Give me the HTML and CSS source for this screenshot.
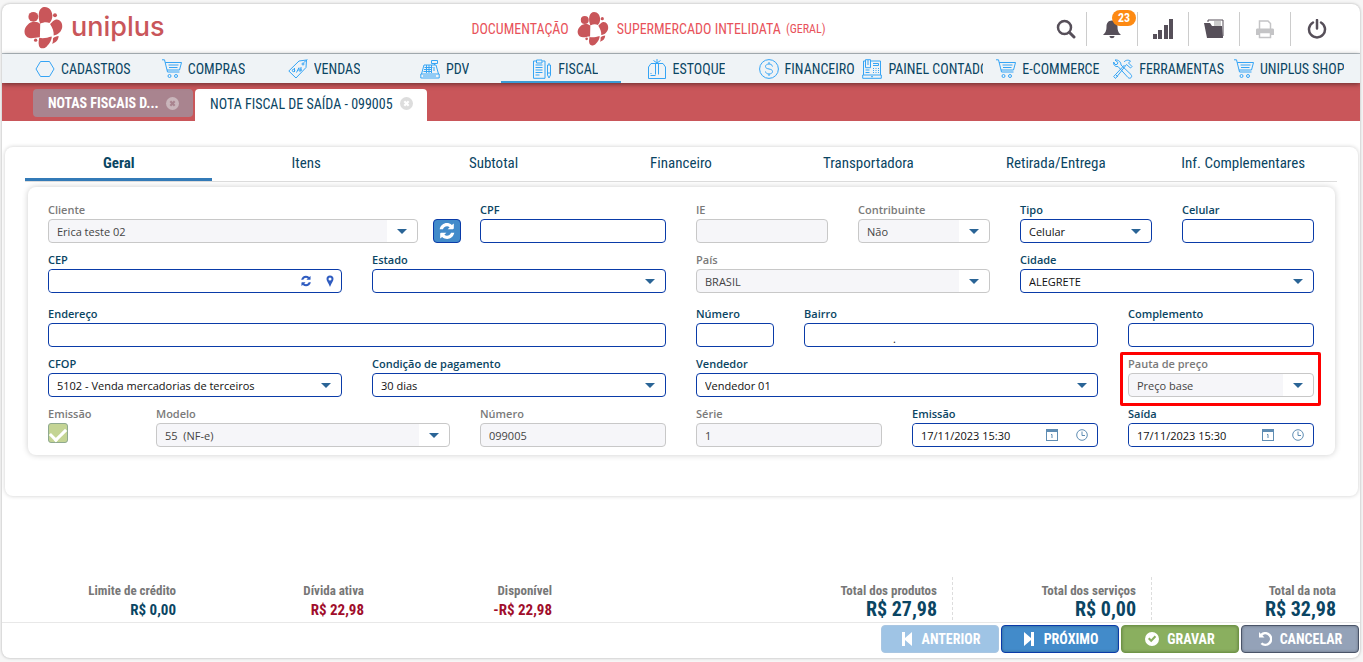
FILE: index.html
```html
<!DOCTYPE html>
<html lang="pt-BR">
<head>
    <meta charset="UTF-8">
    <meta name="viewport" content="width=device-width, initial-scale=1.0">
    <title>Uniplus - Nota Fiscal de Saída</title>
    <link rel="stylesheet" href="styles.css">
</head>
<body>
    <!-- Ícones -->
    <svg class="sprite" aria-hidden="true">
        <symbol id="i-mark" viewBox="0 0 116 128">
            <path d="M62 0C76 0 84 12 85 26C85 36 82 43 76 49C68 45 58 46 48 51C44 40 42 30 44 18C46 6 54 0 62 0Z"/>
            <circle cx="27" cy="30" r="15"/>
            <path d="M24 46C34 44 42 46 48 52L47 92C36 91 20 99 9 92C-3 85 -2 66 7 57C12 52 16 47 24 46Z"/>
            <path d="M96 38C108 36 117 48 115 62C113 74 104 85 89 87C90 76 86 64 78 52C84 46 89 40 96 38Z"/>
            <circle cx="93" cy="25" r="6"/>
            <path d="M45 94C58 98 70 93 83 90C84 100 76 112 68 120C60 128 46 128 44 117C42 108 44 102 45 94Z"/>
            <path d="M87 95C92 90 98 89 104 88C104 99 97 108 84 112C88 106 86 100 87 95Z"/>
            <circle cx="34" cy="101" r="5"/>
        </symbol>
        <symbol id="i-hex" viewBox="0 0 20 20"><path d="M5.500 2.500h9L19 10l-4.500 7.500h-9L1 10z"/></symbol>
        <symbol id="i-cart" viewBox="0 0 20 20"><path d="M0 .8h2.500L5.500 13h12M3.200 3.500H19.500L17.500 11H5M6.500 6h10M7 8.500h8.500"/><circle cx="7.500" cy="17" r="1.500"/><circle cx="14" cy="17" r="1.500"/></symbol>
        <symbol id="i-tag" viewBox="0 0 20 20"><path d="M.8 12L11 2l7.500-1L18 8.500 8 19zM19.500.3l-4 3.500M6.500 9v4M13 8v4M11 8.500l-2.500 5"/><circle cx="15" cy="5" r="1"/><circle cx="5.500" cy="11.500" r="1.200"/><circle cx="12" cy="11" r="1.200"/></symbol>
        <symbol id="i-pdv" viewBox="0 0 20 20"><path d="M.8 15h18.400v4H.8zM1.500 15L4 6h12l2.500 9M11.500 1.500h6v3h-6zM14.500 4.500V6M4.500 8.500h8M4 10.500h8M3.500 12.500h8M6.500 6v8M9 6v8M11.500 6v8M14 8v4M3 17h13"/></symbol>
        <symbol id="i-fiscal" viewBox="0 0 20 20"><path d="M4 2H1.500v17.300h11.500V2H10.500M4.500 1h5.500v3H4.500zM3.500 6h7M3.500 8.500h7M3.500 11h7M3.500 13.500h7M3.500 16h4M15.500 6h3v10L17 19l-1.500-3zM17 4v2M15.500 14h3"/></symbol>
        <symbol id="i-box" viewBox="0 0 20 20"><path d="M1.500 8L4 4.500h12L18.500 8v11.500h-17zM8.500 4.500v11M11.500 4.500v11M10 4.500V0M6.500 1.500L10 4l3.500-2.500M3.500 16.500h5M3.500 14.500h1"/></symbol>
        <symbol id="i-money" viewBox="0 0 20 20"><circle cx="10" cy="10" r="9.400"/><path d="M13.500 7.500C13 5.500 11.500 5 10 5 8 5 6.500 6 6.500 7.500c0 3.500 7 1.500 7 5C13.500 14 12 15 10 15s-3.300-1-3.500-2.500M10 3v2M10 15v2"/></symbol>
        <symbol id="i-painel" viewBox="0 0 20 20"><path d="M1.500 16V2h2M9 2h9.500v14M.7 16h18.600v3.300H.7zM3.500.7h5v8h-5zM6 1v5M11 4.500h5.500v2H11M3.500 11h4M3.500 13.500h4M11 9.500h1M13.500 9.500h1M16 9.500h1M11 11.500h1M13.500 11.500h1M16 11.500h1M11 13.500h1M13.500 13.500h1M16 13.500h1M9 17.700h2"/></symbol>
        <symbol id="i-tools" viewBox="0 0 20 20"><path d="M2 1l3 2.500-1 2L2 5.500.7 3C0 5.500 2 8 5 7.500l10 11c2 2 5-.5 3-3L8 6C8 3 5.500.5 2 1zM11 3c2-2.500 5-2 6.500-1L15.500 4l3.500 3.500-1.500 1.500-4-3.500L2.500 19.500.7 17.500 11.500 6M3 16l2 2"/></symbol>
        <symbol id="i-sync" viewBox="0 0 512 512"><path d="M450 40v140c0 14-10 24-24 24H274l58-58c-68-54-158-26-192 58H48C82 40 262-30 394 84zM62 472V332c0-14 10-24 24-24h152l-58 58c68 54 158 26 192-58h92c-34 164-214 234-346 120z"/></symbol>
    </svg>

    <div class="app">
        <header class="topbar">
            <a class="logo" href="#">
                <svg class="mark"><use href="#i-mark"/></svg>
                <span>uniplus</span>
            </a>
            <div class="company">
                <span>DOCUMENTAÇÃO</span>
                <svg class="mark-small"><use href="#i-mark"/></svg>
                <span>SUPERMERCADO INTELIDATA</span>
                <small>(GERAL)</small>
            </div>
            <div class="actions">
                <button type="button" aria-label="Pesquisar"><svg viewBox="0 0 20 20"><circle cx="8.500" cy="8.500" r="6.500" fill="none" stroke="currentColor" stroke-width="2.500"/><path d="M13.500 13.500l4.500 4.500" stroke="currentColor" stroke-width="3" stroke-linecap="round"/></svg></button>
                <button type="button" aria-label="Notificações"><svg viewBox="0 0 20 20"><path d="M10 1.500c4 0 5.500 3 5.500 6 0 5 1.500 6.500 3.500 8.500H1c2-2 3.500-3.500 3.500-8.500 0-3 1.500-6 5.500-6zM7.500 17h5c0 3-5 3-5 0z" fill="currentColor"/></svg><span class="badge">23</span></button>
                <button type="button" aria-label="Gráficos"><svg viewBox="0 0 20 20"><path d="M0 15h4v5H0zM5 11h4v9H5zM11 6h4v14h-4zM16 0h4v20h-4z" fill="currentColor"/></svg></button>
                <button type="button" aria-label="Arquivos"><svg viewBox="0 0 20 20"><path d="M4 3V1h15v16l-2 1" fill="none" stroke="currentColor"/><path d="M10 2h7v5h-7z" fill="#ccc"/><path d="M0 4h6l2 3h10l1 12H3z" fill="currentColor"/></svg></button>
                <button type="button" aria-label="Imprimir" disabled><svg viewBox="0 0 20 20"><path d="M4.500 10V2H13l2.500 2.500V10M4.500 13.500h11v5h-11z" fill="none" stroke="currentColor" stroke-width="1.500"/><path d="M1 11c0-1 .5-1.500 1.500-1.500h15c1 0 1.500.5 1.500 1.500v5h-3.500v-3h-11v3H1z" fill="currentColor"/></svg></button>
                <button type="button" aria-label="Sair"><svg viewBox="0 0 20 20"><path d="M6 3.500a8 8 0 1 0 8 0M10 1v8.500" fill="none" stroke="currentColor" stroke-width="2.500" stroke-linecap="round"/></svg></button>
            </div>
        </header>

        <nav class="menu">
            <a href="#"><svg><use href="#i-hex"/></svg><span>CADASTROS</span></a>
            <a href="#"><svg><use href="#i-cart"/></svg><span>COMPRAS</span></a>
            <a href="#"><svg><use href="#i-tag"/></svg><span>VENDAS</span></a>
            <a href="#"><svg><use href="#i-pdv"/></svg><span>PDV</span></a>
            <a href="#" class="active"><svg><use href="#i-fiscal"/></svg><span>FISCAL</span></a>
            <a href="#"><svg><use href="#i-box"/></svg><span>ESTOQUE</span></a>
            <a href="#"><svg><use href="#i-money"/></svg><span>FINANCEIRO</span></a>
            <a href="#" class="long"><svg><use href="#i-painel"/></svg><span>PAINEL CONTADOR</span></a>
            <a href="#"><svg><use href="#i-cart"/></svg><span>E-COMMERCE</span></a>
            <a href="#"><svg><use href="#i-tools"/></svg><span>FERRAMENTAS</span></a>
            <a href="#"><svg><use href="#i-cart"/></svg><span>UNIPLUS SHOP</span></a>
        </nav>

        <div class="windows">
            <div class="window-tab">
                <span>NOTAS FISCAIS D...</span>
                <button type="button" class="close" aria-label="Fechar"><svg viewBox="0 0 12 12"><path d="M4 4l4 4M8 4l-4 4"/></svg></button>
            </div>
            <div class="window-tab current">
                <span>NOTA FISCAL DE SAÍDA - 099005</span>
                <button type="button" class="close" aria-label="Fechar"><svg viewBox="0 0 12 12"><path d="M4 4l4 4M8 4l-4 4"/></svg></button>
            </div>
        </div>

        <main class="panel">
            <div class="tabs">
                <button type="button" class="active">Geral</button>
                <button type="button">Itens</button>
                <button type="button">Subtotal</button>
                <button type="button">Financeiro</button>
                <button type="button">Transportadora</button>
                <button type="button">Retirada/Entrega</button>
                <button type="button">Inf. Complementares</button>
            </div>

            <form class="card">
                <div class="row">
                    <div class="client s8">
                        <div class="field off">
                            <label for="cliente">Cliente</label>
                            <div class="select"><select id="cliente" disabled><option>Erica teste 02</option></select></div>
                        </div>
                        <button type="button" class="refresh" aria-label="Atualizar cliente"><svg><use href="#i-sync"/></svg></button>
                    </div>
                    <div class="field s4">
                        <label for="cpf">CPF</label>
                        <input type="text" id="cpf">
                    </div>
                    <div class="field s3 off">
                        <label for="ie">IE</label>
                        <input type="text" id="ie" disabled>
                    </div>
                    <div class="field s3 off">
                        <label for="contribuinte">Contribuinte</label>
                        <div class="select"><select id="contribuinte" disabled><option>Não</option></select></div>
                    </div>
                    <div class="field s3">
                        <label for="tipo">Tipo</label>
                        <div class="select"><select id="tipo"><option>Celular</option></select></div>
                    </div>
                    <div class="field s3">
                        <label for="celular">Celular</label>
                        <input type="text" id="celular">
                    </div>
                </div>

                <div class="row address">
                    <div class="field s6">
                        <label for="cep">CEP</label>
                        <div class="combo">
                            <input type="text" id="cep">
                            <button type="button" aria-label="Buscar CEP"><svg class="icon-small"><use href="#i-sync"/></svg></button>
                            <button type="button" aria-label="Ver no mapa"><svg class="icon-small" viewBox="0 0 12 12"><path d="M6 .5a3.500 3.500 0 0 1 3.500 3.500C9.500 6 7.500 8 6 12 4.500 8 2.500 6 2.500 4A3.500 3.500 0 0 1 6 .5zm0 2A1.500 1.500 0 1 0 6 5.500a1.500 1.500 0 0 0 0-3z"/></svg></button>
                        </div>
                    </div>
                    <div class="field s6">
                        <label for="estado">Estado</label>
                        <div class="select"><select id="estado"><option></option></select></div>
                    </div>
                    <div class="field s6 off">
                        <label for="pais">País</label>
                        <div class="select"><select id="pais" disabled><option>BRASIL</option></select></div>
                    </div>
                    <div class="field s6">
                        <label for="cidade">Cidade</label>
                        <div class="select"><select id="cidade"><option>ALEGRETE</option></select></div>
                    </div>
                </div>

                <div class="row">
                    <div class="field s12">
                        <label for="endereco">Endereço</label>
                        <input type="text" id="endereco">
                    </div>
                    <div class="field s2">
                        <label for="numero">Número</label>
                        <input type="text" id="numero">
                    </div>
                    <div class="field s6">
                        <label for="bairro">Bairro</label>
                        <input type="text" id="bairro" class="bairro" value=".">
                    </div>
                    <div class="field s4">
                        <label for="complemento">Complemento</label>
                        <input type="text" id="complemento">
                    </div>
                </div>

                <div class="row">
                    <div class="field s6">
                        <label for="cfop">CFOP</label>
                        <div class="select"><select id="cfop"><option>5102 - Venda mercadorias de terceiros</option></select></div>
                    </div>
                    <div class="field s6">
                        <label for="condicao">Condição de pagamento</label>
                        <div class="select"><select id="condicao"><option>30 dias</option></select></div>
                    </div>
                    <div class="field s8">
                        <label for="vendedor">Vendedor</label>
                        <div class="select"><select id="vendedor"><option>Vendedor 01</option></select></div>
                    </div>
                    <div class="field s4 off highlight">
                        <label for="pauta">Pauta de preço</label>
                        <div class="select"><select id="pauta" disabled><option>Preço base</option></select></div>
                    </div>
                </div>

                <div class="row">
                    <div class="field s2 off">
                        <label for="emissao-propria">Emissão</label>
                        <input type="checkbox" id="emissao-propria" checked disabled>
                    </div>
                    <div class="field s6 off">
                        <label for="modelo">Modelo</label>
                        <div class="select"><select id="modelo" disabled><option>55 &nbsp;(NF-e)</option></select></div>
                    </div>
                    <div class="field s4 off">
                        <label for="numero-nota">Número</label>
                        <input type="text" id="numero-nota" value="099005" disabled>
                    </div>
                    <div class="field s4 off">
                        <label for="serie">Série</label>
                        <input type="text" id="serie" value="1" disabled>
                    </div>
                    <div class="field s4">
                        <label for="emissao">Emissão</label>
                        <div class="combo date">
                            <input type="text" id="emissao" value="17/11/2023 15:30">
                            <button type="button" aria-label="Escolher data"><svg class="icon-small" viewBox="0 0 12 12"><path d="M0 0h12v12H0zM1 3v8h10V3z" fill-rule="evenodd"/><path d="M5 5.500h1V9" fill="none" stroke="currentColor"/></svg></button>
                            <button type="button" aria-label="Escolher hora"><svg class="icon-small" viewBox="0 0 12 12"><circle cx="6" cy="6" r="5.300" fill="none" stroke="currentColor"/><path d="M6 2.500V6.500h3" fill="none" stroke="currentColor"/></svg></button>
                        </div>
                    </div>
                    <div class="field s4">
                        <label for="saida">Saída</label>
                        <div class="combo date">
                            <input type="text" id="saida" value="17/11/2023 15:30">
                            <button type="button" aria-label="Escolher data"><svg class="icon-small" viewBox="0 0 12 12"><path d="M0 0h12v12H0zM1 3v8h10V3z" fill-rule="evenodd"/><path d="M5 5.500h1V9" fill="none" stroke="currentColor"/></svg></button>
                            <button type="button" aria-label="Escolher hora"><svg class="icon-small" viewBox="0 0 12 12"><circle cx="6" cy="6" r="5.300" fill="none" stroke="currentColor"/><path d="M6 2.500V6.500h3" fill="none" stroke="currentColor"/></svg></button>
                        </div>
                    </div>
                </div>
            </form>
        </main>

        <footer>
            <div class="totals">
                <div class="credit">
                    <div><span>Limite de crédito</span><strong>R$ 0,00</strong></div>
                    <div class="negative"><span>Dívida ativa</span><strong>R$ 22,98</strong></div>
                    <div class="negative"><span>Disponível</span><strong>-R$ 22,98</strong></div>
                </div>
                <div class="sums">
                    <div><span>Total dos produtos</span><strong>R$ 27,98</strong></div>
                    <div><span>Total dos serviços</span><strong>R$ 0,00</strong></div>
                    <div><span>Total da nota</span><strong>R$ 32,98</strong></div>
                </div>
            </div>
            <div class="buttons">
                <button type="button" class="prev" disabled><svg viewBox="0 0 14 14"><path d="M2 0h3v6l7-6v14L5 8v6H2z"/></svg>ANTERIOR</button>
                <button type="button" class="next"><svg viewBox="0 0 14 14"><path d="M12 0H9v6L2 0v14l7-6v6h3z"/></svg>PRÓXIMO</button>
                <button type="button" class="save"><svg viewBox="0 0 14 14"><path d="M7 0a7 7 0 1 1 0 14A7 7 0 0 1 7 0zM3 7l3.200 3.200L11.200 5 9.700 3.600 6.200 7.300 4.400 5.600z" fill-rule="evenodd"/></svg>GRAVAR</button>
                <button type="button" class="cancel"><svg viewBox="0 0 14 14"><path d="M1 0l1.700 1.700A7 7 0 1 1 2.500 12l1.800-1.600a4.500 4.500 0 1 0 .2-6.900L6.500 5.500H1z"/></svg>CANCELAR</button>
            </div>
        </footer>
    </div>
</body>
</html>
```

FILE: styles.css
```css
* {
    margin: 0;
    padding: 0;
    box-sizing: border-box;
}

body {
    background-color: #f6f6f6;
    color: #0a4563;
    font-family: "Roboto Condensed", "Liberation Sans Narrow", Roboto, sans-serif;
    font-size: 14px;
    padding: 4px 3px 4px 2px;
}

button {
    font-family: inherit;
    border: none;
    background: none;
    cursor: pointer;
}

a {
    color: inherit;
    text-decoration: none;
}

svg {
    display: block;
    flex: none;
    fill: currentColor;
}

.sprite {
    display: none;
}

.app {
    display: flex;
    flex-direction: column;
    min-height: calc(100vh - 8px);
    background: white;
    border-radius: 8px;
    box-shadow: 0 0 3px rgba(0, 0, 0, 0.3);
    overflow: hidden;
}

/* Topo */
.topbar {
    display: flex;
    align-items: center;
    height: 50px;
    padding: 0 18px 0 22px;
    border-bottom: 1px solid #bcc5cb;
}

.logo {
    display: flex;
    align-items: center;
    gap: 8px;
    width: 228px;
    color: #c9565a;
    font-family: Inter, sans-serif;
    font-size: 27px;
    font-weight: 500;
}

.logo span {
    padding-bottom: 5px;
}

.mark {
    width: 39px;
    height: 42px;
    margin-bottom: 2px;
}

.mark-small {
    width: 32px;
    height: 34px;
    margin: 0 3px;
    color: #c9565a;
}

.company {
    flex: 1;
    display: flex;
    align-items: center;
    justify-content: center;
    gap: 5px;
    color: #e8525a;
}

.company small {
    font-size: 12px;
}

.actions {
    display: flex;
    color: #564f59;
}

.actions button {
    position: relative;
    display: flex;
    align-items: center;
    justify-content: center;
    width: 51px;
    height: 34px;
    color: inherit;
    border-right: 1px solid #ccc;
}

.actions button:first-child {
    width: 42px;
}

.actions button:last-child {
    border-right: none;
}

.actions button:disabled {
    color: #c4c4c6;
}

.actions svg {
    width: 20px;
    height: 20px;
}

.badge {
    position: absolute;
    top: -2px;
    right: 1px;
    width: 24px;
    border-radius: 8px;
    background: #fd8a13;
    color: white;
    font-size: 12px;
    line-height: 16px;
    font-weight: bold;
    text-align: center;
}

/* Menu */
.menu {
    position: relative;
    display: grid;
    grid-template-columns: repeat(11, minmax(0, 1fr));
    height: 29px;
    padding: 0 15px 0 16px;
    background: #eff3f6;
    box-shadow: 0 1px 5px rgba(0, 0, 0, 0.5);
}

.menu a {
    display: flex;
    align-items: center;
    justify-content: center;
    gap: 6px;
    padding: 2px 0 0 9px;
    border-bottom: 2px solid transparent;
    white-space: nowrap;
}

.menu .long {
    padding-left: 0;
}

.menu .active {
    border-bottom-color: #3a9bd6;
}

.menu svg {
    width: 20px;
    height: 20px;
    fill: none;
    stroke: #35a4f5;
}

.menu span {
    min-width: 0;
    overflow: hidden;
}

/* Janelas abertas */
.windows {
    display: flex;
    align-items: flex-start;
    gap: 2px;
    height: 38px;
    padding: 6px 31px 0;
    background: #c9565a;
}

.window-tab {
    display: flex;
    align-items: center;
    justify-content: space-between;
    width: 160px;
    height: 28px;
    padding: 0 14px 0 15px;
    border-radius: 4px;
    background: #a9848f;
    color: white;
    font-weight: bold;
}

.window-tab.current {
    width: 232px;
    height: 32px;
    padding-bottom: 3px;
    border-radius: 4px 4px 0 0;
    background: white;
    color: #0a4563;
    font-weight: normal;
}

.close {
    border-radius: 50%;
    background: #c9b5bb;
    color: #a9848f;
}

.current .close {
    background: #ddd;
    color: white;
}

.close svg {
    width: 13px;
    height: 13px;
    stroke: currentColor;
    stroke-width: 2;
}

/* Painel */
.panel {
    margin: 26px 2px 0 3px;
    padding: 0 21px 41px 20px;
    border-radius: 8px;
    box-shadow: 0 0 4px rgba(0, 0, 0, 0.2);
}

.tabs {
    display: flex;
    border-bottom: 1px solid #ddd;
    margin-bottom: 5px;
}

.tabs button {
    flex: 1 1 0;
    height: 34px;
    border-bottom: 3px solid transparent;
    color: #0a4563;
    font-size: 15px;
}

.tabs .active {
    border-bottom-color: #337ab7;
    font-weight: bold;
}

.card {
    display: flex;
    flex-direction: column;
    gap: 10px;
    margin: 0 2px 0 3px;
    padding: 16px 21px 8px 20px;
    border-radius: 8px;
    box-shadow: 0 0 6px rgba(0, 0, 0, 0.2);
}

.row {
    display: grid;
    grid-template-columns: repeat(24, minmax(0, 1fr));
    column-gap: 30px;
}

.address {
    margin-bottom: 4px;
}

.s2 { grid-column: span 2; }
.s3 { grid-column: span 3; }
.s4 { grid-column: span 4; }
.s6 { grid-column: span 6; }
.s8 { grid-column: span 8; }
.s12 { grid-column: span 12; }

.field, .field input, .field select, .refresh {
    font-family: "Open Sans", "Noto Sans", sans-serif;
    font-size: 11px;
}

.field label {
    display: block;
    height: 16px;
    line-height: 14px;
    font-weight: 600;
    white-space: nowrap;
}

.off label {
    color: #7a7a7a;
}

.field input[type="text"], .field select, .combo {
    width: 100%;
    height: 24px;
    padding: 0 8px;
    border: 1px solid #0a3ba8;
    border-radius: 4px;
    background: white;
    color: #111;
    outline: none;
    appearance: none;
}

.field input[type="text"]:disabled, .field select:disabled {
    border-color: #c8c8c8;
    background: #f6f6f9;
    color: #444;
    opacity: 1;
}

.field select:disabled {
    background: linear-gradient(90deg, #f6f6f9 calc(100% - 30px), white calc(100% - 30px));
}

.select {
    position: relative;
}

.select::after {
    content: "";
    position: absolute;
    top: 10px;
    right: 11px;
    border: 5px solid transparent;
    border-top-color: #2a6496;
    border-bottom: none;
    pointer-events: none;
}

.combo {
    display: flex;
    align-items: center;
    gap: 12px;
    padding: 0 5px 0 0;
}

.field .combo input[type="text"] {
    flex: 1;
    min-width: 0;
    height: 22px;
    border: none;
}

.combo button {
    color: #2f5cc0;
}

.date {
    gap: 18px;
    padding-right: 9px;
}

.date button {
    color: #5f8db3;
}

.icon-small {
    width: 12px;
    height: 12px;
}

.field input[type="text"].bairro {
    padding: 6px 8px 0 88px;
}

.client {
    display: flex;
    align-items: flex-end;
    gap: 15px;
    margin-right: -11px;
}

.client .field {
    flex: 1;
}

.refresh {
    display: flex;
    align-items: center;
    justify-content: center;
    width: 28px;
    height: 24px;
    border: 1px solid #0a3ba8;
    border-radius: 4px;
    background: #428bca;
    color: white;
}

.refresh svg {
    width: 18px;
    height: 18px;
}

.field input[type="checkbox"] {
    display: flex;
    justify-content: center;
    width: 20px;
    height: 20px;
    padding-top: 1px;
    border: 1px solid #8fa98f;
    border-radius: 3px;
    background: #c4d494;
    appearance: none;
}

.field input[type="checkbox"]::before {
    content: "";
    width: 7px;
    height: 13px;
    border: solid white;
    border-width: 0 3px 3px 0;
    transform: rotate(45deg);
}

.highlight {
    position: relative;
}

.highlight::after {
    content: "";
    position: absolute;
    inset: -5px -7px -9px -8px;
    border: 3px solid #f00;
    border-radius: 2px;
    pointer-events: none;
}

/* Rodapé */
footer {
    margin-top: auto;
}

.totals {
    display: flex;
    justify-content: space-between;
    align-items: flex-end;
    height: 46px;
    padding-right: 9px;
    border-bottom: 1px solid #e8e8e8;
}

.credit, .sums {
    display: flex;
    text-align: right;
}

.credit div {
    width: 188px;
    padding: 0 14px 2px 0;
}

.sums div {
    width: 199px;
    height: 43px;
    padding: 5px 15px 0 0;
    margin-bottom: 2px;
    border-right: 1px dashed #ddd;
}

.sums div:last-child {
    border-right: none;
}

.totals span {
    display: block;
    color: #777;
    font-size: 13px;
    line-height: 18px;
    font-weight: bold;
}

.totals strong {
    display: block;
    font-size: 15px;
    line-height: 20px;
}

.totals .sums strong {
    font-size: 20px;
    line-height: 18px;
}

.negative strong {
    color: #a00d2b;
}

.buttons {
    display: flex;
    justify-content: flex-end;
    gap: 2px;
    padding: 2px 1px 5px 0;
}

.buttons button {
    display: flex;
    align-items: center;
    justify-content: center;
    gap: 8px;
    width: 118px;
    height: 28px;
    border: 1px solid;
    border-radius: 4px;
    color: white;
    font-size: 14px;
    font-weight: bold;
    box-shadow: inset 0 0 3px rgba(0, 0, 0, 0.3);
}

.buttons svg {
    width: 14px;
    height: 14px;
}

.buttons .prev {
    background: #9fc4e5;
    border-color: #a9c6e2;
    box-shadow: none;
}

.buttons .next {
    background: #428bca;
    border-color: #0a3ba8;
}

.buttons .save {
    background: #8aaf5f;
    border-color: #6f9547;
}

.buttons .cancel {
    background: #94a2b8;
    border-color: #4a5468;
}
```
